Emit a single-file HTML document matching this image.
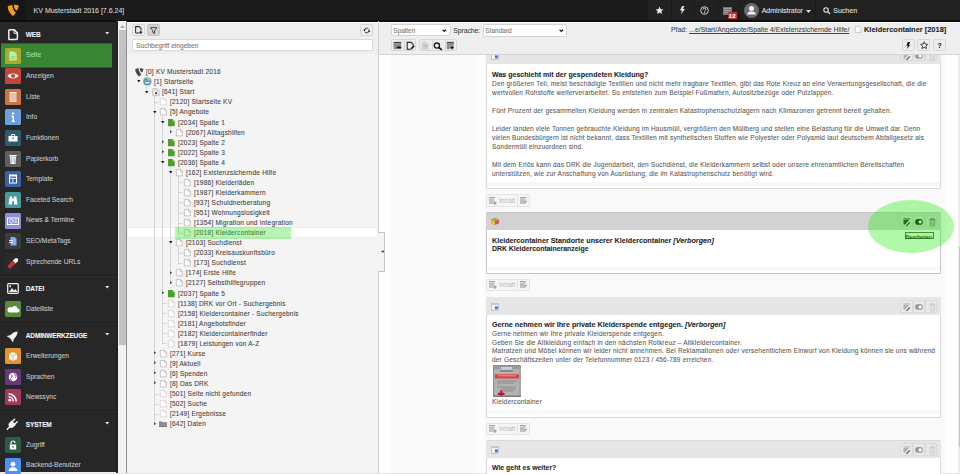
<!DOCTYPE html><html><head><meta charset="utf-8"><style>
*{margin:0;padding:0;box-sizing:border-box}
html,body{width:960px;height:474px;overflow:hidden;background:#f0f0f0;font-family:"Liberation Sans", sans-serif;}
.ab{position:absolute}
.t{position:absolute;white-space:nowrap;line-height:10px;-webkit-text-stroke:0.08px currentColor}
svg{position:absolute;overflow:visible}
</style></head><body>
<div class="ab" style="left:0px;top:0px;width:960px;height:21.6px;background:#1b1b1b"></div>
<div class="ab" style="left:0px;top:0px;width:26px;height:20px;background:#161616"></div>
<div class="ab" style="left:648px;top:0px;width:312px;height:20px;background:#222"></div>
<div class="ab" style="left:0px;top:19.8px;width:960px;height:1.8px;background:#0e0e0e"></div>
<svg style="left:0;top:0" width="26" height="21" viewBox="0 0 26 21"><path d="M7.8 6.4C9 5.6 11 5.1 12.3 5C12.6 8.5 14 11 15.8 12.6C15 14.5 13.8 15.6 12.7 15.9C10 13.5 7.6 9.5 7.8 6.4Z M13.8 4.9C15.5 4.6 17.5 4.9 18.7 5.6C18.8 7.5 17.8 9.8 16.6 10.6C15 9.5 13.9 7.5 13.8 4.9Z" fill="#f49a1a"/></svg>
<div class="t" style="left:33.6px;top:5.60px;font-size:7px;color:#d8d8d8;">KV Musterstadt 2016 [7.6.24]</div>
<div class="ab" style="left:670.8px;top:0px;width:1px;height:20px;background:#1a1a1a"></div>
<div class="ab" style="left:693.7px;top:0px;width:1px;height:20px;background:#1a1a1a"></div>
<div class="ab" style="left:717.5px;top:0px;width:1px;height:20px;background:#1a1a1a"></div>
<div class="ab" style="left:739.2px;top:0px;width:1px;height:20px;background:#1a1a1a"></div>
<div class="ab" style="left:814.6px;top:0px;width:1px;height:20px;background:#1a1a1a"></div>
<svg style="left:654.5px;top:5.5px" width="9" height="9" viewBox="0 0 24 24"><path d="M12 1.5l3.1 7 7.4.6-5.6 4.9 1.7 7.4L12 17.5l-6.6 3.9 1.7-7.4L1.5 9.1l7.4-.6z" fill="#eee"/></svg>
<svg style="left:679.5px;top:6px" width="5" height="8.5" viewBox="0 0 10 17"><path d="M4 0h5L6 6h4L2 17l2-8H0z" fill="#ddd"/></svg>
<svg style="left:700px;top:6px" width="9" height="9" viewBox="0 0 18 18"><circle cx="9" cy="9" r="7.6" fill="none" stroke="#ddd" stroke-width="1.8"/><path d="M6.3 7a2.7 2.7 0 1 1 3.8 2.4c-.8.4-1.1.8-1.1 1.7" fill="none" stroke="#ddd" stroke-width="1.8"/><circle cx="9" cy="13.3" r="1.1" fill="#ddd"/></svg>
<svg style="left:723px;top:7px" width="9" height="8" viewBox="0 0 9 8"><rect x="0" y="0" width="9" height="8" fill="#777"/><path d="M1 1.5h7M1 3.5h7M1 5.5h7" stroke="#aaa" stroke-width="0.8"/></svg>
<div class="ab" style="left:728px;top:12px;width:8.5px;height:7px;background:#c8302c;border-radius:1px"></div>
<div class="t" style="left:728.8px;top:11.20px;font-size:6px;color:#fff;font-weight:bold">12</div>
<svg style="left:743.8px;top:2.8px" width="15" height="15" viewBox="0 0 30 30"><circle cx="15" cy="15" r="15" fill="#6b6b6b"/><circle cx="15" cy="11" r="5" fill="#f2f2f2"/><path d="M6 23c1-5 5-6 9-6s8 1 9 6z" fill="#f2f2f2"/></svg>
<div class="t" style="left:761.7px;top:6.20px;font-size:7px;color:#e0e0e0;">Administrator</div>
<svg style="left:806px;top:9.5px" width="5" height="3" viewBox="0 0 5 3"><path d="M0 0h5L2.5 3z" fill="#ddd"/></svg>
<svg style="left:822.5px;top:6.8px" width="7.5" height="7.5" viewBox="0 0 16 16"><circle cx="6.5" cy="6.5" r="4.8" fill="none" stroke="#eee" stroke-width="2.2"/><path d="M10 10l4.8 4.8" stroke="#eee" stroke-width="2.6"/></svg>
<div class="t" style="left:833.3px;top:6.20px;font-size:7px;color:#e0e0e0;">Suchen</div>
<div class="ab" style="left:0px;top:21.6px;width:118px;height:450.9px;background:#272727"></div>
<div class="ab" style="left:115.8px;top:21px;width:1.8px;height:451.5px;background:#212121"></div>
<div class="ab" style="left:0px;top:472.5px;width:960px;height:1.5px;background:#e6e6e6"></div>
<svg style="left:7.9px;top:34.3px;margin-top:-5.4px" width="10.2" height="11.4" viewBox="0 0 10.2 11.4"><path d="M1.5 0.8h4.8l3.1 3.1v5.7a1 1 0 0 1-1 1H1.5a0.7 0.7 0 0 1-0.7-0.7V1.5a0.7 0.7 0 0 1 0.7-0.7z" fill="none" stroke="#eee" stroke-width="1.5"/><path d="M6 1v3.3h3.3" fill="none" stroke="#eee" stroke-width="1"/></svg>
<div class="t" style="left:25.8px;top:29.80px;font-size:6.5px;color:#f4f4f4;font-weight:bold;letter-spacing:-0.15px">WEB</div>
<svg style="left:104.8px;top:32.10px" width="4.4" height="2.4" viewBox="0 0 5 3"><path d="M0 0h5L2.5 3z" fill="#eee"/></svg>
<div class="ab" style="left:0.6px;top:42.8px;width:111.4px;height:25px;background:#3a8436;border-top:1.6px solid #1c6c1c;border-bottom:1.8px solid #1c6c1c"></div>
<div class="ab" style="left:5px;top:47.60px;width:16px;height:16px;background:#a6aa2e;border-radius:1.5px"></div>
<svg style="left:5px;top:47.60px" width="16" height="16" viewBox="0 0 16 16"><path d="M4.2 3.5h5l2.6 2.6v6.4H4.2z" fill="#b4f2a4"/><path d="M5.5 8.5h5M5.5 10.3h5M8 8.5v3.5" stroke="#9cc47a" stroke-width="0.6"/></svg>
<div class="t" style="left:26px;top:50.40px;font-size:6.65px;color:#a4e49c;">Seite</div>
<div class="ab" style="left:5px;top:68.22px;width:16px;height:16px;background:#c4453a;border-radius:1.5px"></div>
<svg style="left:5px;top:68.22px" width="16" height="16" viewBox="0 0 16 16"><path d="M2.5 8c2.2-3.2 8.8-3.2 11 0-2.2 3.2-8.8 3.2-11 0z" fill="#fff"/><circle cx="8" cy="8" r="2" fill="#c4453a"/></svg>
<div class="t" style="left:26px;top:71.02px;font-size:6.65px;color:#c8c8c8;">Anzeigen</div>
<div class="ab" style="left:5px;top:88.84px;width:16px;height:16px;background:#c87444;border-radius:1.5px"></div>
<svg style="left:5px;top:88.84px" width="16" height="16" viewBox="0 0 16 16"><rect x="4.5" y="3" width="7" height="10" fill="#f4e6dc"/><path d="M4.5 5h7M4.5 7h7M4.5 9h7M4.5 11h7" stroke="#c87444" stroke-width="0.6"/></svg>
<div class="t" style="left:26px;top:91.64px;font-size:6.65px;color:#c8c8c8;">Liste</div>
<div class="ab" style="left:5px;top:109.46px;width:16px;height:16px;background:#6b9fdc;border-radius:1.5px"></div>
<svg style="left:5px;top:109.46px" width="16" height="16" viewBox="0 0 16 16"><circle cx="8" cy="4.5" r="1.2" fill="#fff"/><path d="M6.5 6.8h2.5v5h1v1.2H6.5v-1.2h1v-3.8h-1z" fill="#fff"/></svg>
<div class="t" style="left:26px;top:112.26px;font-size:6.65px;color:#c8c8c8;">Info</div>
<div class="ab" style="left:5px;top:130.08px;width:16px;height:16px;background:#2f5b6b;border-radius:1.5px"></div>
<svg style="left:5px;top:130.08px" width="16" height="16" viewBox="0 0 16 16"><rect x="3.5" y="6" width="9" height="5.5" fill="#fff"/><path d="M6.3 6V4.5h3.4V6" fill="none" stroke="#fff" stroke-width="0.9"/><rect x="7.2" y="7.6" width="1.6" height="1.2" fill="#2f5b6b"/></svg>
<div class="t" style="left:26px;top:132.88px;font-size:6.65px;color:#c8c8c8;">Funktionen</div>
<div class="ab" style="left:5px;top:150.70px;width:16px;height:16px;background:#5f5f5f;border-radius:1.5px"></div>
<svg style="left:5px;top:150.70px" width="16" height="16" viewBox="0 0 16 16"><path d="M5 5.5h6l-.6 7.5H5.6z" fill="#fff"/><rect x="4.3" y="4" width="7.4" height="1.2" fill="#fff"/><path d="M6.8 6.5v5.5M9.2 6.5v5.5" stroke="#5f5f5f" stroke-width="0.6"/></svg>
<div class="t" style="left:26px;top:153.50px;font-size:6.65px;color:#c8c8c8;">Papierkorb</div>
<div class="ab" style="left:5px;top:171.32px;width:16px;height:16px;background:#3a62a8;border-radius:1.5px"></div>
<svg style="left:5px;top:171.32px" width="16" height="16" viewBox="0 0 16 16"><rect x="4" y="3.5" width="8" height="9" fill="#fff"/><rect x="5" y="5.5" width="6" height="1.3" fill="#3a62a8"/><rect x="5" y="7.8" width="2.5" height="3.8" fill="#3a62a8"/><rect x="8.3" y="7.8" width="2.7" height="3.8" fill="#3a62a8"/></svg>
<div class="t" style="left:26px;top:174.12px;font-size:6.65px;color:#c8c8c8;">Template</div>
<div class="ab" style="left:5px;top:191.94px;width:16px;height:16px;background:#4a9898;border-radius:1.5px"></div>
<svg style="left:5px;top:191.94px" width="16" height="16" viewBox="0 0 16 16"><path d="M3.5 12.5l1.2-8h2.4v8zM8.9 12.5V4.5h2.4l1.2 8z" fill="#fff"/><rect x="7" y="6.5" width="2" height="2.5" fill="#fff"/></svg>
<div class="t" style="left:26px;top:194.74px;font-size:6.65px;color:#c8c8c8;">Faceted Search</div>
<div class="ab" style="left:5px;top:212.56px;width:16px;height:16px;background:#8e8ee0;border-radius:1.5px"></div>
<svg style="left:5px;top:212.56px" width="16" height="16" viewBox="0 0 16 16"><rect x="2.5" y="5" width="11" height="6.5" fill="none" stroke="#fff" stroke-width="1"/><circle cx="6.5" cy="8.2" r="1.8" fill="none" stroke="#fff" stroke-width="0.9"/><path d="M9.5 6.8h2.5M9.5 8.2h2.5M9.5 9.6h2.5" stroke="#fff" stroke-width="0.7"/></svg>
<div class="t" style="left:26px;top:215.36px;font-size:6.65px;color:#c8c8c8;">News &amp; Termine</div>
<div class="ab" style="left:5px;top:233.18px;width:16px;height:16px;background:#3c3c3c;border-radius:1.5px"></div>
<svg style="left:5px;top:233.18px" width="16" height="16" viewBox="0 0 16 16"><path d="M5.5 4h4l2 2v6.5h-6z" fill="#7db0f0"/><path d="M4 7.5h4M4 9.5h4" stroke="#fff" stroke-width="0.8"/></svg>
<div class="t" style="left:26px;top:235.98px;font-size:6.65px;color:#c8c8c8;">SEO/MetaTags</div>
<div class="ab" style="left:5px;top:253.80px;width:16px;height:16px;background:#2a2a2a;border-radius:1.5px"></div>
<svg style="left:5px;top:253.80px" width="16" height="16" viewBox="0 0 16 16"><path d="M3.2 11.2l4.6-4.6 2.8 2.8-4.6 4.6a2 2 0 0 1-2.8-2.8z" fill="#c83030"/><path d="M7.8 6.6l2.2-2.2a2 2 0 0 1 2.8 2.8l-2.2 2.2z" fill="#f0f0f0"/></svg>
<div class="t" style="left:26px;top:256.60px;font-size:6.65px;color:#c8c8c8;">Sprechende URLs</div>
<div class="ab" style="left:0px;top:274.5px;width:118px;height:1px;background:#1f1f1f"></div>
<div class="ab" style="left:0px;top:275.5px;width:118px;height:1px;background:#2b2b2b"></div>
<svg style="left:7px;top:288.2px;margin-top:-5.5px" width="12" height="11" viewBox="0 0 12 11"><rect x="0.7" y="0.7" width="10.6" height="9.6" rx="1" fill="none" stroke="#eee" stroke-width="1.3"/><path d="M2 9l3-4 2 2.5 1.5-1.5L10.5 9z" fill="#eee"/><circle cx="3.2" cy="3.2" r="1" fill="#eee"/></svg>
<div class="t" style="left:25.8px;top:283.70px;font-size:6.5px;color:#f4f4f4;font-weight:bold;letter-spacing:-0.15px">DATEI</div>
<svg style="left:104.8px;top:286.00px" width="4.4" height="2.4" viewBox="0 0 5 3"><path d="M0 0h5L2.5 3z" fill="#eee"/></svg>
<div class="ab" style="left:5px;top:300.80px;width:16px;height:16px;background:#5b8a3e;border-radius:1.5px"></div>
<svg style="left:5px;top:300.80px" width="16" height="16" viewBox="0 0 16 16"><path d="M4 11.5h8.5a2 2 0 0 0 0-4 3 3 0 0 0-5.6-1 2.4 2.4 0 0 0-2.9 5z" fill="#fff"/></svg>
<div class="t" style="left:26px;top:303.60px;font-size:6.65px;color:#c8c8c8;">Dateiliste</div>
<div class="ab" style="left:0px;top:322.0px;width:118px;height:1px;background:#1f1f1f"></div>
<div class="ab" style="left:0px;top:323.0px;width:118px;height:1px;background:#2b2b2b"></div>
<svg style="left:0;top:335.6px;margin-top:-335.6px" width="26" height="350" viewBox="0 0 26 350"><g transform="translate(12.8 336.2) rotate(-45)"><path d="M-2.5 -2.4C0 -2.8 4 -2.6 6.8 0C4 2.6 0 2.8 -2.5 2.4z" fill="#f4f4f4"/><path d="M-1 -2.4L-4.2 -4.6L-3.8 -1.5zM-1 2.4L-4.2 4.6L-3.8 1.5z" fill="#f4f4f4"/><rect x="-3.6" y="-1.6" width="1.6" height="3.2" fill="#f4f4f4"/></g></svg>
<div class="t" style="left:25.8px;top:331.10px;font-size:6.5px;color:#f4f4f4;font-weight:bold;letter-spacing:-0.15px">ADMINWERKZEUGE</div>
<svg style="left:104.8px;top:333.40px" width="4.4" height="2.4" viewBox="0 0 5 3"><path d="M0 0h5L2.5 3z" fill="#eee"/></svg>
<div class="ab" style="left:5px;top:348.20px;width:16px;height:16px;background:#e29430;border-radius:1.5px"></div>
<svg style="left:5px;top:348.20px" width="16" height="16" viewBox="0 0 16 16"><path d="M4 6l4-2 4 2v5l-4 2-4-2z" fill="#fff"/><path d="M4 6l4 2 4-2M8 8v5" stroke="#e29430" stroke-width="0.7" fill="none"/></svg>
<div class="t" style="left:26px;top:351.00px;font-size:6.65px;color:#c8c8c8;">Erweiterungen</div>
<div class="ab" style="left:5px;top:368.80px;width:16px;height:16px;background:#6a3778;border-radius:1.5px"></div>
<svg style="left:5px;top:368.80px" width="16" height="16" viewBox="0 0 16 16"><circle cx="8" cy="8" r="4.3" fill="#fff"/><path d="M6 5.5c1 1 1.5 1 1 2.5-.5.6-1.8.5-1.5 2 .5.5 1 1.5.5 2.2M9.5 4.5c-.5 1 .5 1.5 1.5 1.7.5 1 .2 2-1 2.5" stroke="#6a3778" stroke-width="0.9" fill="none"/></svg>
<div class="t" style="left:26px;top:371.60px;font-size:6.65px;color:#c8c8c8;">Sprachen</div>
<div class="ab" style="left:5px;top:389.40px;width:16px;height:16px;background:#a23a5c;border-radius:1.5px"></div>
<svg style="left:5px;top:389.40px" width="16" height="16" viewBox="0 0 16 16"><circle cx="4.8" cy="11.2" r="1.4" fill="#fff"/><path d="M3.5 7.8a4.8 4.8 0 0 1 4.8 4.8M3.5 4.8a7.8 7.8 0 0 1 7.8 7.8" stroke="#fff" stroke-width="1.6" fill="none"/></svg>
<div class="t" style="left:26px;top:392.20px;font-size:6.65px;color:#c8c8c8;">Newssync</div>
<div class="ab" style="left:0px;top:410.0px;width:118px;height:1px;background:#1f1f1f"></div>
<div class="ab" style="left:0px;top:411.0px;width:118px;height:1px;background:#2b2b2b"></div>
<svg style="left:0;top:424.2px;margin-top:-424.2px" width="26" height="440" viewBox="0 0 26 440"><g transform="translate(12.2 424.2) rotate(-45)"><circle cx="-1" cy="0" r="2.9" fill="#f4f4f4"/><rect x="-1" y="-2.9" width="3.2" height="5.8" fill="#f4f4f4"/><path d="M2 -1.8H5.2M2 1.8H5.2" stroke="#f4f4f4" stroke-width="1.5" stroke-linecap="round"/><path d="M-3.5 0H-7" stroke="#f4f4f4" stroke-width="1.4" stroke-linecap="round"/></g></svg>
<div class="t" style="left:25.8px;top:419.70px;font-size:6.5px;color:#f4f4f4;font-weight:bold;letter-spacing:-0.15px">SYSTEM</div>
<svg style="left:104.8px;top:422.00px" width="4.4" height="2.4" viewBox="0 0 5 3"><path d="M0 0h5L2.5 3z" fill="#eee"/></svg>
<div class="ab" style="left:5px;top:437.00px;width:16px;height:16px;background:#2f5a45;border-radius:1.5px"></div>
<svg style="left:5px;top:437.00px" width="16" height="16" viewBox="0 0 16 16"><rect x="4.8" y="7.5" width="6.4" height="5" fill="#fff"/><path d="M6 7.5V6a2 2 0 0 1 4 0" stroke="#fff" stroke-width="1.2" fill="none"/><rect x="7.6" y="9" width="0.9" height="2" fill="#2f5a45"/></svg>
<div class="t" style="left:26px;top:439.80px;font-size:6.65px;color:#c8c8c8;">Zugriff</div>
<div class="ab" style="left:5px;top:457.60px;width:16px;height:16px;background:#5190ee;border-radius:1.5px"></div>
<svg style="left:5px;top:457.60px" width="16" height="16" viewBox="0 0 16 16"><circle cx="8" cy="6.2" r="2.4" fill="#fff"/><path d="M3.5 13c.5-2.8 2-3.8 4.5-3.8s4 1 4.5 3.8z" fill="#fff"/></svg>
<div class="t" style="left:26px;top:460.40px;font-size:6.65px;color:#c8c8c8;">Backend-Benutzer</div>
<div class="ab" style="left:118px;top:21px;width:8px;height:451.5px;background:#f2f2f2"></div>
<svg style="left:119.5px;top:24.5px" width="5" height="3" viewBox="0 0 5 3"><path d="M0 3L2.5 0 5 3z" fill="#aaa"/></svg>
<div class="ab" style="left:119.3px;top:29.7px;width:6.7px;height:315.8px;background:#c2c2c2"></div>
<div class="ab" style="left:126px;top:21px;width:1px;height:451.5px;background:#8f8f8f"></div>
<div class="ab" style="left:127px;top:21.6px;width:251.5px;height:32.2px;background:#eeeeee;border-top:1px solid #fafafa"></div>
<div class="ab" style="left:127px;top:53.6px;width:251.5px;height:0.9px;background:#d2d2d2"></div>
<div class="ab" style="left:127px;top:54px;width:251.5px;height:418.5px;background:#f4f4f4"></div>
<div class="ab" style="left:131.5px;top:24.2px;width:13.1px;height:12.3px;background:#ececec;border:0.6px solid #d6d6d6;border-radius:1.5px"></div>
<svg style="left:134.9px;top:26.4px" width="7.2" height="7.7" viewBox="0 0 14 15"><path d="M1.2 13.8V1.2h7l3.6 3.6v3.4M8.6 13.8H1.2" fill="none" stroke="#2a2a2a" stroke-width="2"/><path d="M11.2 9.5v5.5M8.5 12.3H14" stroke="#111" stroke-width="2.2"/></svg>
<div class="ab" style="left:146.7px;top:24.2px;width:13.1px;height:12.3px;background:#d2d2d2;border:0.6px solid #c2c2c2;border-radius:1.5px"></div>
<svg style="left:149.6px;top:26.7px" width="7.4" height="7.1" viewBox="0 0 15 14"><path d="M1 1.2h13L9.3 6.8v6L5.7 11V6.8z" fill="#e8e8e8" stroke="#333" stroke-width="1.9" stroke-linejoin="round"/></svg>
<div class="ab" style="left:359.8px;top:24.2px;width:13.2px;height:12.3px;background:#ececec;border:0.6px solid #d6d6d6;border-radius:1.5px"></div>
<svg style="left:362.6px;top:26.9px" width="7.6" height="7" viewBox="0 0 16 15"><path d="M3 6.5A5.2 5.2 0 0 1 12 4.2M13 8.5A5.2 5.2 0 0 1 4 10.8" fill="none" stroke="#333" stroke-width="2"/><path d="M0.5 5.5l2.5 4 2.5-4z M15.5 9.5l-2.5-4-2.5 4z" fill="#111"/></svg>
<div class="ab" style="left:131.9px;top:39.4px;width:241.5px;height:11.8px;background:#fff;border:0.6px solid #d8d8d8;border-radius:1.5px"></div>
<div class="t" style="left:136.1px;top:40.80px;font-size:6.6px;color:#777;">Suchbegriff eingeben</div>
<div class="ab" style="left:378px;top:21px;width:1px;height:451.5px;background:#cfcfcf"></div>
<div class="ab" style="left:127.5px;top:228.2px;width:249px;height:8.9px;background:#fff;border-radius:1px;box-shadow:0 0 0 0.5px #e8e8e8"></div>
<div class="ab" style="left:146.4px;top:85.76px;width:0.8px;height:6.060000000000002px;background:#d6d6d6"></div>
<div class="ab" style="left:154.4px;top:95.82000000000001px;width:0.8px;height:327.98px;background:#d6d6d6"></div>
<div class="ab" style="left:162.4px;top:115.94px;width:0.8px;height:227.38px;background:#d6d6d6"></div>
<div class="ab" style="left:170.4px;top:126.0px;width:0.8px;height:6.060000000000002px;background:#d6d6d6"></div>
<div class="ab" style="left:170.4px;top:166.24px;width:0.8px;height:116.72000000000003px;background:#d6d6d6"></div>
<div class="ab" style="left:178.4px;top:176.3px;width:0.8px;height:56.360000000000014px;background:#d6d6d6"></div>
<div class="ab" style="left:178.4px;top:246.72000000000003px;width:0.8px;height:16.120000000000005px;background:#d6d6d6"></div>
<div class="ab" style="left:154.4px;top:101.88px;width:5px;height:0.8px;background:#d6d6d6"></div>
<div class="ab" style="left:178.4px;top:182.36px;width:5px;height:0.8px;background:#d6d6d6"></div>
<div class="ab" style="left:178.4px;top:192.42000000000002px;width:5px;height:0.8px;background:#d6d6d6"></div>
<div class="ab" style="left:178.4px;top:202.48000000000002px;width:5px;height:0.8px;background:#d6d6d6"></div>
<div class="ab" style="left:178.4px;top:212.54000000000002px;width:5px;height:0.8px;background:#d6d6d6"></div>
<div class="ab" style="left:178.4px;top:222.60000000000002px;width:5px;height:0.8px;background:#d6d6d6"></div>
<div class="ab" style="left:178.4px;top:232.66000000000003px;width:5px;height:0.8px;background:#d6d6d6"></div>
<div class="ab" style="left:178.4px;top:252.78000000000003px;width:5px;height:0.8px;background:#d6d6d6"></div>
<div class="ab" style="left:178.4px;top:262.84000000000003px;width:5px;height:0.8px;background:#d6d6d6"></div>
<div class="ab" style="left:162.4px;top:303.08000000000004px;width:5px;height:0.8px;background:#d6d6d6"></div>
<div class="ab" style="left:162.4px;top:313.14px;width:5px;height:0.8px;background:#d6d6d6"></div>
<div class="ab" style="left:162.4px;top:323.2px;width:5px;height:0.8px;background:#d6d6d6"></div>
<div class="ab" style="left:162.4px;top:333.26px;width:5px;height:0.8px;background:#d6d6d6"></div>
<div class="ab" style="left:162.4px;top:343.32px;width:5px;height:0.8px;background:#d6d6d6"></div>
<div class="ab" style="left:154.4px;top:393.62px;width:5px;height:0.8px;background:#d6d6d6"></div>
<div class="ab" style="left:154.4px;top:403.68px;width:5px;height:0.8px;background:#d6d6d6"></div>
<div class="ab" style="left:154.4px;top:413.74px;width:5px;height:0.8px;background:#d6d6d6"></div>
<svg style="left:134.80px;top:67.70px" width="8.6" height="8.6" viewBox="7.6 4.6 11.4 11.4"><path d="M7.8 6.4C9 5.6 11 5.1 12.3 5C12.6 8.5 14 11 15.8 12.6C15 14.5 13.8 15.6 12.7 15.9C10 13.5 7.6 9.5 7.8 6.4Z M13.8 4.9C15.5 4.6 17.5 4.9 18.7 5.6C18.8 7.5 17.8 9.8 16.6 10.6C15 9.5 13.9 7.5 13.8 4.9Z" fill="#4a4a4a"/></svg>
<div class="t" style="left:146px;top:67.20px;font-size:6.55px;color:#444;letter-spacing:0.2px">[0] KV Musterstadt 2016</div>
<svg style="left:142.90px;top:77.06px" width="8.6" height="8.9" viewBox="0 0 17 17.6"><circle cx="8.5" cy="8.8" r="8" fill="#4b8fdc" stroke="#9cc4f0" stroke-width="1"/><path d="M7.5 1.5c3.5-.8 7 1.5 8 4.5-2 1.8-5 1.2-6.5-.2-1.2-1-1.8-2.6-1.5-4.3z" fill="#a8d03c"/><path d="M1 8c2 .3 3.5 2.5 3.3 5.5-1.8-.5-3-2.8-3.3-5.5z" fill="#7ab83a"/><rect x="4.6" y="7" width="7.8" height="5.8" rx="1" fill="#f4f4f4" stroke="#999" stroke-width="0.6"/><rect x="6" y="7.6" width="5" height="1.8" fill="#333"/></svg>
<svg style="left:137.10px;top:80.46px" width="3.6" height="2.4" viewBox="0 0 4 3"><path d="M0 0h4L2 3z" fill="#111"/></svg>
<div class="t" style="left:154px;top:77.26px;font-size:6.55px;color:#444;letter-spacing:0.2px">[1] Startseite</div>
<svg style="left:152.20px;top:87.62px" width="7.7" height="8.1" viewBox="0 0 15 16"><path d="M1 1h8.5L14 5.5V15H1z" fill="#e4e4e4" stroke="#a8a8a8" stroke-width="1"/><path d="M9.5 1v4.5H14" fill="#f4f4f4" stroke="#a8a8a8" stroke-width="1"/><circle cx="8" cy="10.5" r="3.2" fill="#fff"/><circle cx="8" cy="10.5" r="2" fill="#111"/></svg>
<svg style="left:145.10px;top:90.52px" width="3.6" height="2.4" viewBox="0 0 4 3"><path d="M0 0h4L2 3z" fill="#111"/></svg>
<div class="t" style="left:162px;top:87.32px;font-size:6.55px;color:#444;letter-spacing:0.2px">[641] Start</div>
<svg style="left:160.10px;top:98.38px" width="6.7" height="7.3" viewBox="0 0 14 15"><path d="M.7.7h8.6l4 4v9.6H.7z" fill="#fcfcfc" stroke="#c4c4c4" stroke-width="1.1"/><path d="M9.3.7v4h4" fill="none" stroke="#c4c4c4" stroke-width="1"/></svg>
<div class="t" style="left:170px;top:97.38px;font-size:6.55px;color:#444;letter-spacing:0.2px">[2120] Startseite KV</div>
<svg style="left:160.10px;top:108.44px" width="6.7" height="7.3" viewBox="0 0 14 15"><path d="M.7.7h8.6l4 4v9.6H.7z" fill="#fcfcfc" stroke="#9a9a9a" stroke-width="1.1"/><path d="M9.3.7v4h4" fill="none" stroke="#9a9a9a" stroke-width="1"/></svg>
<svg style="left:153.10px;top:110.64px" width="3.6" height="2.4" viewBox="0 0 4 3"><path d="M0 0h4L2 3z" fill="#111"/></svg>
<div class="t" style="left:170px;top:107.44px;font-size:6.55px;color:#444;letter-spacing:0.2px">[5] Angebote</div>
<svg style="left:168.10px;top:118.50px" width="6.7" height="7.3" viewBox="0 0 14 15"><path d="M0 0h9.5L14 4.5V15H0z" fill="#4aa02a"/><path d="M9.5 0v4.5H14" fill="#9ad07a"/></svg>
<svg style="left:161.10px;top:120.70px" width="3.6" height="2.4" viewBox="0 0 4 3"><path d="M0 0h4L2 3z" fill="#111"/></svg>
<div class="t" style="left:178px;top:117.50px;font-size:6.55px;color:#444;letter-spacing:0.2px">[2034] Spalte 1</div>
<svg style="left:176.10px;top:128.56px" width="6.7" height="7.3" viewBox="0 0 14 15"><path d="M.7.7h8.6l4 4v9.6H.7z" fill="#fcfcfc" stroke="#9a9a9a" stroke-width="1.1"/><path d="M9.3.7v4h4" fill="none" stroke="#9a9a9a" stroke-width="1"/></svg>
<svg style="left:169.90px;top:129.76px" width="2.2" height="3.4" viewBox="0 0 3 4"><path d="M0 0v4l3-2z" fill="#444"/></svg>
<div class="t" style="left:186px;top:127.56px;font-size:6.55px;color:#444;letter-spacing:0.2px">[2067] Alltagshilfen</div>
<svg style="left:168.10px;top:138.62px" width="6.7" height="7.3" viewBox="0 0 14 15"><path d="M0 0h9.5L14 4.5V15H0z" fill="#4aa02a"/><path d="M9.5 0v4.5H14" fill="#9ad07a"/></svg>
<svg style="left:161.90px;top:139.82px" width="2.2" height="3.4" viewBox="0 0 3 4"><path d="M0 0v4l3-2z" fill="#444"/></svg>
<div class="t" style="left:178px;top:137.62px;font-size:6.55px;color:#444;letter-spacing:0.2px">[2023] Spalte 2</div>
<svg style="left:168.10px;top:148.68px" width="6.7" height="7.3" viewBox="0 0 14 15"><path d="M0 0h9.5L14 4.5V15H0z" fill="#4aa02a"/><path d="M9.5 0v4.5H14" fill="#9ad07a"/></svg>
<svg style="left:161.90px;top:149.88px" width="2.2" height="3.4" viewBox="0 0 3 4"><path d="M0 0v4l3-2z" fill="#444"/></svg>
<div class="t" style="left:178px;top:147.68px;font-size:6.55px;color:#444;letter-spacing:0.2px">[2022] Spalte 3</div>
<svg style="left:168.10px;top:158.74px" width="6.7" height="7.3" viewBox="0 0 14 15"><path d="M0 0h9.5L14 4.5V15H0z" fill="#4aa02a"/><path d="M9.5 0v4.5H14" fill="#9ad07a"/></svg>
<svg style="left:161.10px;top:160.94px" width="3.6" height="2.4" viewBox="0 0 4 3"><path d="M0 0h4L2 3z" fill="#111"/></svg>
<div class="t" style="left:178px;top:157.74px;font-size:6.55px;color:#444;letter-spacing:0.2px">[2036] Spalte 4</div>
<svg style="left:176.10px;top:168.80px" width="6.7" height="7.3" viewBox="0 0 14 15"><path d="M.7.7h8.6l4 4v9.6H.7z" fill="#fcfcfc" stroke="#9a9a9a" stroke-width="1.1"/><path d="M9.3.7v4h4" fill="none" stroke="#9a9a9a" stroke-width="1"/></svg>
<svg style="left:169.10px;top:171.00px" width="3.6" height="2.4" viewBox="0 0 4 3"><path d="M0 0h4L2 3z" fill="#111"/></svg>
<div class="t" style="left:186px;top:167.80px;font-size:6.55px;color:#444;letter-spacing:0.2px">[162] Existenzsichernde Hilfe</div>
<svg style="left:184.10px;top:178.86px" width="6.7" height="7.3" viewBox="0 0 14 15"><path d="M.7.7h8.6l4 4v9.6H.7z" fill="#fcfcfc" stroke="#9a9a9a" stroke-width="1.1"/><path d="M9.3.7v4h4" fill="none" stroke="#9a9a9a" stroke-width="1"/></svg>
<div class="t" style="left:194px;top:177.86px;font-size:6.55px;color:#444;letter-spacing:0.2px">[1986] Kleiderläden</div>
<svg style="left:184.10px;top:188.92px" width="6.7" height="7.3" viewBox="0 0 14 15"><path d="M.7.7h8.6l4 4v9.6H.7z" fill="#fcfcfc" stroke="#9a9a9a" stroke-width="1.1"/><path d="M9.3.7v4h4" fill="none" stroke="#9a9a9a" stroke-width="1"/></svg>
<div class="t" style="left:194px;top:187.92px;font-size:6.55px;color:#444;letter-spacing:0.2px">[1987] Kleiderkammern</div>
<svg style="left:184.10px;top:198.98px" width="6.7" height="7.3" viewBox="0 0 14 15"><path d="M.7.7h8.6l4 4v9.6H.7z" fill="#fcfcfc" stroke="#9a9a9a" stroke-width="1.1"/><path d="M9.3.7v4h4" fill="none" stroke="#9a9a9a" stroke-width="1"/></svg>
<div class="t" style="left:194px;top:197.98px;font-size:6.55px;color:#444;letter-spacing:0.2px">[937] Schuldnerberatung</div>
<svg style="left:184.10px;top:209.04px" width="6.7" height="7.3" viewBox="0 0 14 15"><path d="M.7.7h8.6l4 4v9.6H.7z" fill="#fcfcfc" stroke="#9a9a9a" stroke-width="1.1"/><path d="M9.3.7v4h4" fill="none" stroke="#9a9a9a" stroke-width="1"/></svg>
<div class="t" style="left:194px;top:208.04px;font-size:6.55px;color:#444;letter-spacing:0.2px">[951] Wohnungslosigkeit</div>
<svg style="left:184.10px;top:219.10px" width="6.7" height="7.3" viewBox="0 0 14 15"><path d="M.7.7h8.6l4 4v9.6H.7z" fill="#fcfcfc" stroke="#9a9a9a" stroke-width="1.1"/><path d="M9.3.7v4h4" fill="none" stroke="#9a9a9a" stroke-width="1"/></svg>
<div class="t" style="left:194px;top:218.10px;font-size:6.55px;color:#444;letter-spacing:0.2px">[1354] Migration und Integration</div>
<svg style="left:184.10px;top:229.16px" width="6.7" height="7.3" viewBox="0 0 14 15"><path d="M.7.7h8.6l4 4v9.6H.7z" fill="#fcfcfc" stroke="#9a9a9a" stroke-width="1.1"/><path d="M9.3.7v4h4" fill="none" stroke="#9a9a9a" stroke-width="1"/></svg>
<div class="t" style="left:194px;top:228.16px;font-size:6.55px;color:#444;letter-spacing:0.2px">[2018] Kleidercontainer</div>
<svg style="left:176.10px;top:239.22px" width="6.7" height="7.3" viewBox="0 0 14 15"><path d="M.7.7h8.6l4 4v9.6H.7z" fill="#fcfcfc" stroke="#9a9a9a" stroke-width="1.1"/><path d="M9.3.7v4h4" fill="none" stroke="#9a9a9a" stroke-width="1"/></svg>
<svg style="left:169.10px;top:241.42px" width="3.6" height="2.4" viewBox="0 0 4 3"><path d="M0 0h4L2 3z" fill="#111"/></svg>
<div class="t" style="left:186px;top:238.22px;font-size:6.55px;color:#444;letter-spacing:0.2px">[2103] Suchdienst</div>
<svg style="left:184.10px;top:249.28px" width="6.7" height="7.3" viewBox="0 0 14 15"><path d="M.7.7h8.6l4 4v9.6H.7z" fill="#fcfcfc" stroke="#9a9a9a" stroke-width="1.1"/><path d="M9.3.7v4h4" fill="none" stroke="#9a9a9a" stroke-width="1"/></svg>
<div class="t" style="left:194px;top:248.28px;font-size:6.55px;color:#444;letter-spacing:0.2px">[2033] Kreisauskunftsbüro</div>
<svg style="left:184.10px;top:259.34px" width="6.7" height="7.3" viewBox="0 0 14 15"><path d="M.7.7h8.6l4 4v9.6H.7z" fill="#fcfcfc" stroke="#9a9a9a" stroke-width="1.1"/><path d="M9.3.7v4h4" fill="none" stroke="#9a9a9a" stroke-width="1"/></svg>
<div class="t" style="left:194px;top:258.34px;font-size:6.55px;color:#444;letter-spacing:0.2px">[173] Suchdienst</div>
<svg style="left:176.10px;top:269.40px" width="6.7" height="7.3" viewBox="0 0 14 15"><path d="M.7.7h8.6l4 4v9.6H.7z" fill="#fcfcfc" stroke="#9a9a9a" stroke-width="1.1"/><path d="M9.3.7v4h4" fill="none" stroke="#9a9a9a" stroke-width="1"/></svg>
<svg style="left:169.90px;top:270.60px" width="2.2" height="3.4" viewBox="0 0 3 4"><path d="M0 0v4l3-2z" fill="#444"/></svg>
<div class="t" style="left:186px;top:268.40px;font-size:6.55px;color:#444;letter-spacing:0.2px">[174] Erste Hilfe</div>
<svg style="left:176.10px;top:279.46px" width="6.7" height="7.3" viewBox="0 0 14 15"><path d="M.7.7h8.6l4 4v9.6H.7z" fill="#fcfcfc" stroke="#9a9a9a" stroke-width="1.1"/><path d="M9.3.7v4h4" fill="none" stroke="#9a9a9a" stroke-width="1"/></svg>
<svg style="left:169.90px;top:280.66px" width="2.2" height="3.4" viewBox="0 0 3 4"><path d="M0 0v4l3-2z" fill="#444"/></svg>
<div class="t" style="left:186px;top:278.46px;font-size:6.55px;color:#444;letter-spacing:0.2px">[2127] Selbsthilfegruppen</div>
<svg style="left:168.10px;top:289.52px" width="6.7" height="7.3" viewBox="0 0 14 15"><path d="M0 0h9.5L14 4.5V15H0z" fill="#4aa02a"/><path d="M9.5 0v4.5H14" fill="#9ad07a"/></svg>
<svg style="left:161.90px;top:290.72px" width="2.2" height="3.4" viewBox="0 0 3 4"><path d="M0 0v4l3-2z" fill="#444"/></svg>
<div class="t" style="left:178px;top:288.52px;font-size:6.55px;color:#444;letter-spacing:0.2px">[2037] Spalte 5</div>
<svg style="left:168.10px;top:299.58px" width="6.7" height="7.3" viewBox="0 0 14 15"><path d="M.7.7h8.6l4 4v9.6H.7z" fill="#fcfcfc" stroke="#c4c4c4" stroke-width="1.1"/><path d="M9.3.7v4h4" fill="none" stroke="#c4c4c4" stroke-width="1"/></svg>
<div class="t" style="left:178px;top:298.58px;font-size:6.55px;color:#444;letter-spacing:0.2px">[1138] DRK vor Ort - Suchergebnis</div>
<svg style="left:168.10px;top:309.64px" width="6.7" height="7.3" viewBox="0 0 14 15"><path d="M.7.7h8.6l4 4v9.6H.7z" fill="#fcfcfc" stroke="#c4c4c4" stroke-width="1.1"/><path d="M9.3.7v4h4" fill="none" stroke="#c4c4c4" stroke-width="1"/></svg>
<div class="t" style="left:178px;top:308.64px;font-size:6.55px;color:#444;letter-spacing:0.2px">[2158] Kleidercontainer - Suchergebnis</div>
<svg style="left:168.10px;top:319.70px" width="6.7" height="7.3" viewBox="0 0 14 15"><path d="M.7.7h8.6l4 4v9.6H.7z" fill="#fcfcfc" stroke="#c4c4c4" stroke-width="1.1"/><path d="M9.3.7v4h4" fill="none" stroke="#c4c4c4" stroke-width="1"/></svg>
<div class="t" style="left:178px;top:318.70px;font-size:6.55px;color:#444;letter-spacing:0.2px">[2181] Angebotsfinder</div>
<svg style="left:168.10px;top:329.76px" width="6.7" height="7.3" viewBox="0 0 14 15"><path d="M.7.7h8.6l4 4v9.6H.7z" fill="#fcfcfc" stroke="#c4c4c4" stroke-width="1.1"/><path d="M9.3.7v4h4" fill="none" stroke="#c4c4c4" stroke-width="1"/></svg>
<div class="t" style="left:178px;top:328.76px;font-size:6.55px;color:#444;letter-spacing:0.2px">[2182] Kleidercontainerfinder</div>
<svg style="left:168.10px;top:339.82px" width="6.7" height="7.3" viewBox="0 0 14 15"><path d="M.7.7h8.6l4 4v9.6H.7z" fill="#fcfcfc" stroke="#c4c4c4" stroke-width="1.1"/><path d="M9.3.7v4h4" fill="none" stroke="#c4c4c4" stroke-width="1"/></svg>
<div class="t" style="left:178px;top:338.82px;font-size:6.55px;color:#444;letter-spacing:0.2px">[1879] Leistungen von A-Z</div>
<svg style="left:160.10px;top:349.88px" width="6.7" height="7.3" viewBox="0 0 14 15"><path d="M.7.7h8.6l4 4v9.6H.7z" fill="#fcfcfc" stroke="#9a9a9a" stroke-width="1.1"/><path d="M9.3.7v4h4" fill="none" stroke="#9a9a9a" stroke-width="1"/></svg>
<svg style="left:153.90px;top:351.08px" width="2.2" height="3.4" viewBox="0 0 3 4"><path d="M0 0v4l3-2z" fill="#444"/></svg>
<div class="t" style="left:170px;top:348.88px;font-size:6.55px;color:#444;letter-spacing:0.2px">[271] Kurse</div>
<svg style="left:160.10px;top:359.94px" width="6.7" height="7.3" viewBox="0 0 14 15"><path d="M.7.7h8.6l4 4v9.6H.7z" fill="#fcfcfc" stroke="#9a9a9a" stroke-width="1.1"/><path d="M9.3.7v4h4" fill="none" stroke="#9a9a9a" stroke-width="1"/></svg>
<svg style="left:153.90px;top:361.14px" width="2.2" height="3.4" viewBox="0 0 3 4"><path d="M0 0v4l3-2z" fill="#444"/></svg>
<div class="t" style="left:170px;top:358.94px;font-size:6.55px;color:#444;letter-spacing:0.2px">[9] Aktuell</div>
<svg style="left:160.10px;top:370.00px" width="6.7" height="7.3" viewBox="0 0 14 15"><path d="M.7.7h8.6l4 4v9.6H.7z" fill="#fcfcfc" stroke="#9a9a9a" stroke-width="1.1"/><path d="M9.3.7v4h4" fill="none" stroke="#9a9a9a" stroke-width="1"/></svg>
<svg style="left:153.90px;top:371.20px" width="2.2" height="3.4" viewBox="0 0 3 4"><path d="M0 0v4l3-2z" fill="#444"/></svg>
<div class="t" style="left:170px;top:369.00px;font-size:6.55px;color:#444;letter-spacing:0.2px">[6] Spenden</div>
<svg style="left:160.10px;top:380.06px" width="6.7" height="7.3" viewBox="0 0 14 15"><path d="M.7.7h8.6l4 4v9.6H.7z" fill="#fcfcfc" stroke="#9a9a9a" stroke-width="1.1"/><path d="M9.3.7v4h4" fill="none" stroke="#9a9a9a" stroke-width="1"/></svg>
<svg style="left:153.90px;top:381.26px" width="2.2" height="3.4" viewBox="0 0 3 4"><path d="M0 0v4l3-2z" fill="#444"/></svg>
<div class="t" style="left:170px;top:379.06px;font-size:6.55px;color:#444;letter-spacing:0.2px">[8] Das DRK</div>
<svg style="left:160.10px;top:390.12px" width="6.7" height="7.3" viewBox="0 0 14 15"><path d="M.7.7h8.6l4 4v9.6H.7z" fill="#fcfcfc" stroke="#c4c4c4" stroke-width="1.1"/><path d="M9.3.7v4h4" fill="none" stroke="#c4c4c4" stroke-width="1"/></svg>
<div class="t" style="left:170px;top:389.12px;font-size:6.55px;color:#444;letter-spacing:0.2px">[501] Seite nicht gefunden</div>
<svg style="left:160.10px;top:400.18px" width="6.7" height="7.3" viewBox="0 0 14 15"><path d="M.7.7h8.6l4 4v9.6H.7z" fill="#fcfcfc" stroke="#c4c4c4" stroke-width="1.1"/><path d="M9.3.7v4h4" fill="none" stroke="#c4c4c4" stroke-width="1"/></svg>
<div class="t" style="left:170px;top:399.18px;font-size:6.55px;color:#444;letter-spacing:0.2px">[502] Suche</div>
<svg style="left:160.10px;top:410.24px" width="6.7" height="7.3" viewBox="0 0 14 15"><path d="M.7.7h8.6l4 4v9.6H.7z" fill="#fcfcfc" stroke="#c4c4c4" stroke-width="1.1"/><path d="M9.3.7v4h4" fill="none" stroke="#c4c4c4" stroke-width="1"/></svg>
<div class="t" style="left:170px;top:409.24px;font-size:6.55px;color:#444;letter-spacing:0.2px">[2149] Ergebnisse</div>
<svg style="left:159.20px;top:420.50px" width="8" height="6" viewBox="0 0 16 12"><path d="M0 1h6l1.5 1.5H16V12H0z" fill="#777"/><path d="M0 4h16M0 6.5h16M0 9h16" stroke="#ccc" stroke-width="0.7"/></svg>
<svg style="left:153.90px;top:421.50px" width="2.2" height="3.4" viewBox="0 0 3 4"><path d="M0 0v4l3-2z" fill="#444"/></svg>
<div class="t" style="left:170px;top:419.30px;font-size:6.55px;color:#444;letter-spacing:0.2px">[642] Daten</div>
<div class="ab" style="left:175.3px;top:226.7px;width:116px;height:12.8px;background:rgba(60,230,50,0.38)"></div>
<div class="ab" style="left:379px;top:54px;width:581px;height:418.5px;background:#fff"></div>
<div class="ab" style="left:391px;top:54px;width:85px;height:418.5px;background:#f9f9f9"></div>
<div class="ab" style="left:476px;top:54px;width:9px;height:418.5px;background:#fdfdfd"></div>
<div class="ab" style="left:485px;top:54px;width:460px;height:418.5px;background:#f9f9f9"></div>
<div class="ab" style="left:958px;top:54px;width:2px;height:418.5px;background:#ececec"></div>
<div class="ab" style="left:958.6px;top:247px;width:1.4px;height:200px;background:#c4c4c4"></div>
<div class="ab" style="left:486px;top:46.2px;width:455px;height:143.00000000000003px;background:#fff;border:0.8px solid #d9d9d9;border-radius:1px"></div>
<div class="ab" style="left:486.4px;top:46.6px;width:454.2px;height:17.4px;background:#e6e6e6"></div>
<div class="ab" style="left:486.8px;top:182.0px;width:453.4px;height:3.7px;background:#f7f7f7"></div>
<div class="ab" style="left:900.4px;top:49.1px;width:12.2px;height:12.4px;background:rgba(255,255,255,0.10);border:0.6px solid rgba(0,0,0,0.06);border-radius:1px"></div>
<div class="ab" style="left:912.6999999999999px;top:49.1px;width:12.2px;height:12.4px;background:rgba(255,255,255,0.10);border:0.6px solid rgba(0,0,0,0.06);border-radius:1px"></div>
<div class="ab" style="left:925.0px;top:49.1px;width:12.2px;height:12.4px;background:rgba(255,255,255,0.10);border:0.6px solid rgba(0,0,0,0.06);border-radius:1px"></div>
<svg style="left:902.7px;top:51.60px" width="8" height="8" viewBox="0 0 16 16"><path d="M1 1h13v2H1zM1 4h10v1.5L4 13H1z" fill="#b0b0b0"/><path d="M6 15l7-7 1.6 1.6-7 7z" fill="#555"/></svg>
<svg style="left:915px;top:52.90px" width="8" height="5.8" viewBox="0 0 16 12"><rect x="0" y="0" width="16" height="12" rx="6" fill="#9a9a9a"/><circle cx="10.5" cy="6" r="3.3" fill="#fff"/></svg>
<svg style="left:928.5px;top:51.60px" width="6.8" height="8" viewBox="0 0 14 16"><path d="M2 4h10l-1 12H3z" fill="none" stroke="#c4c4c4" stroke-width="1.4"/><path d="M1 2.5h12M5 2.5V1h4v1.5" stroke="#c4c4c4" stroke-width="1.4" fill="none"/><path d="M5.5 6.5v7M8.5 6.5v7" stroke="#c4c4c4" stroke-width="1"/></svg>
<svg style="left:491.4px;top:51.80px" width="7.8" height="7.8" viewBox="0 0 16 16"><rect x="0.5" y="0.5" width="15" height="15" fill="#f4f4f4" stroke="#9a9a9a" stroke-width="1"/><rect x="0.5" y="0.5" width="15" height="3.5" fill="#c8c8c8"/><rect x="8" y="7" width="6" height="6" fill="#3a7ae0"/></svg>
<div class="ab" style="left:379px;top:21.6px;width:581px;height:32.2px;background:#eeeeee;border-top:1px solid #fafafa"></div>
<div class="ab" style="left:379px;top:53.6px;width:581px;height:0.9px;background:#d4d4d4"></div>
<div class="t" style="left:492px;top:69.50px;font-size:7.05px;color:#262626;font-weight:bold">Was geschieht mit der gespendeten Kleidung?</div>
<div class="t" style="left:492px;top:78.50px;font-size:6.5px;color:#595959;letter-spacing:0.19px">Den größeren Teil, meist beschädigte Textilien und nicht mehr tragbare Textilien, gibt das Rote Kreuz an eine Verwertungsgesellschaft, die die</div>
<div class="t" style="left:492px;top:87.50px;font-size:6.5px;color:#595959;letter-spacing:0.19px">wertvollen Rohstoffe weiterverarbeitet. So entstehen zum Beispiel Fußmatten, Autositzbezüge oder Putzlappen.</div>
<div class="t" style="left:492px;top:105.50px;font-size:6.5px;color:#595959;letter-spacing:0.19px">Fünf Prozent der gesammelten Kleidung werden in zentralen Katastrophenschutzlagern nach Klimazonen getrennt bereit gehalten.</div>
<div class="t" style="left:492px;top:123.50px;font-size:6.5px;color:#595959;letter-spacing:0.19px">Leider landen viele Tonnen gebrauchte Kleidung im Hausmüll, vergrößern den Müllberg und stellen eine Belastung für die Umwelt dar. Denn</div>
<div class="t" style="left:492px;top:132.50px;font-size:6.5px;color:#595959;letter-spacing:0.19px">vielen Bundesbürgern ist nicht bekannt, dass Textilien mit synthetischen Stoffen wie Polyester oder Polyamid laut deutschem Abfallgesetz als</div>
<div class="t" style="left:492px;top:141.50px;font-size:6.5px;color:#595959;letter-spacing:0.19px">Sondermüll einzuordnen sind.</div>
<div class="t" style="left:492px;top:159.50px;font-size:6.5px;color:#595959;letter-spacing:0.19px">Mit dem Erlös kann das DRK die Jugendarbeit, den Suchdienst, die Kleiderkammern selbst oder unsere ehrenamtlichen Bereitschaften</div>
<div class="t" style="left:492px;top:168.50px;font-size:6.5px;color:#595959;letter-spacing:0.19px">unterstützen, wie zur Anschaffung von Ausrüstung, die im Katastrophenschutz benötigt wird.</div>
<div class="ab" style="left:486.3px;top:194.4px;width:43.5px;height:12.2px;background:#f5f5f5;border:0.7px solid #e4e4e4;border-radius:1.2px"></div>
<div class="ab" style="left:516.8px;top:194.4px;width:0.7px;height:12.2px;background:#e4e4e4"></div>
<svg style="left:489px;top:196.80px" width="8.2" height="7.9" viewBox="0 0 16 15.4"><rect x="0" y="0" width="12" height="2.6" fill="#a8a8a8"/><rect x="0" y="3.4" width="10" height="10" fill="#bdbdbd"/><path d="M1.5 6h7M1.5 8.5h5M1.5 11h4" stroke="#d8d8d8" stroke-width="0.9"/><path d="M11.6 8v7.4M7.9 11.7h7.4" stroke="#f5f5f5" stroke-width="4.2"/><path d="M11.6 8.6v6.4M8.4 11.8h6.4" stroke="#8c8c8c" stroke-width="2.2"/></svg>
<div class="t" style="left:499px;top:196.00px;font-size:6.6px;color:#c2c2c2;">Inhalt</div>
<svg style="left:520px;top:196.80px" width="7.2" height="7.2" viewBox="0 0 14 14"><rect x="0" y="0" width="12" height="2.6" fill="#a8a8a8"/><rect x="0" y="3.4" width="10" height="10" fill="#bdbdbd"/><path d="M6 14l2-3 4.5-4.5 1.5 1.5L9.5 12.5z" fill="#666" stroke="#f5f5f5" stroke-width="0.8"/></svg>
<div class="ab" style="left:486px;top:212.2px;width:455px;height:61.80000000000003px;background:#fff;border:0.8px solid #c4c4c4;border-radius:1px"></div>
<div class="ab" style="left:486.4px;top:212.6px;width:454.2px;height:17.400000000000013px;background:#d2d2d2"></div>
<div class="ab" style="left:486.8px;top:266.8px;width:453.4px;height:3.7px;background:#f7f7f7"></div>
<div class="ab" style="left:900.4px;top:215.1px;width:12.2px;height:12.4px;background:rgba(255,255,255,0.10);border:0.6px solid rgba(0,0,0,0.06);border-radius:1px"></div>
<div class="ab" style="left:912.6999999999999px;top:215.1px;width:12.2px;height:12.4px;background:rgba(255,255,255,0.10);border:0.6px solid rgba(0,0,0,0.06);border-radius:1px"></div>
<div class="ab" style="left:925.0px;top:215.1px;width:12.2px;height:12.4px;background:rgba(255,255,255,0.10);border:0.6px solid rgba(0,0,0,0.06);border-radius:1px"></div>
<svg style="left:902.7px;top:217.60px" width="8" height="8" viewBox="0 0 16 16"><path d="M1 1h13v2H1zM1 4h10v1.5L4 13H1z" fill="#222"/><path d="M6 15l7-7 1.6 1.6-7 7z" fill="#111"/></svg>
<svg style="left:915px;top:218.90px" width="8" height="5.8" viewBox="0 0 16 12"><rect x="0" y="0" width="16" height="12" rx="6" fill="#111"/><circle cx="10.5" cy="6" r="3.3" fill="#fff"/></svg>
<svg style="left:928.5px;top:217.60px" width="6.8" height="8" viewBox="0 0 14 16"><path d="M2 4h10l-1 12H3z" fill="none" stroke="#555" stroke-width="1.4"/><path d="M1 2.5h12M5 2.5V1h4v1.5" stroke="#555" stroke-width="1.4" fill="none"/><path d="M5.5 6.5v7M8.5 6.5v7" stroke="#555" stroke-width="1"/></svg>
<svg style="left:491.4px;top:217.80px" width="8" height="7" viewBox="0 0 16 14"><path d="M8 0l8 3.5v7L8 14 0 10.5v-7z" fill="#e84b5b"/><path d="M0 3.5L8 7v7L0 10.5z" fill="#f2c22a"/><path d="M0 3.5L8 0l8 3.5L8 7z" fill="#7cc24a"/></svg>
<div class="t" style="left:492px;top:235.50px;font-size:7.2px;color:#262626;font-weight:bold">Kleidercontainer Standorte unserer Kleidercontainer <i>[Verborgen]</i></div>
<div class="t" style="left:492px;top:244.40px;font-size:6.9px;color:#262626;font-weight:bold">DRK Kleidercontaineranzeige</div>
<div class="ab" style="left:486.3px;top:278.8px;width:43.5px;height:12.2px;background:#f5f5f5;border:0.7px solid #e4e4e4;border-radius:1.2px"></div>
<div class="ab" style="left:516.8px;top:278.8px;width:0.7px;height:12.2px;background:#e4e4e4"></div>
<svg style="left:489px;top:281.20px" width="8.2" height="7.9" viewBox="0 0 16 15.4"><rect x="0" y="0" width="12" height="2.6" fill="#a8a8a8"/><rect x="0" y="3.4" width="10" height="10" fill="#bdbdbd"/><path d="M1.5 6h7M1.5 8.5h5M1.5 11h4" stroke="#d8d8d8" stroke-width="0.9"/><path d="M11.6 8v7.4M7.9 11.7h7.4" stroke="#f5f5f5" stroke-width="4.2"/><path d="M11.6 8.6v6.4M8.4 11.8h6.4" stroke="#8c8c8c" stroke-width="2.2"/></svg>
<div class="t" style="left:499px;top:280.40px;font-size:6.6px;color:#c2c2c2;">Inhalt</div>
<svg style="left:520px;top:281.20px" width="7.2" height="7.2" viewBox="0 0 14 14"><rect x="0" y="0" width="12" height="2.6" fill="#a8a8a8"/><rect x="0" y="3.4" width="10" height="10" fill="#bdbdbd"/><path d="M6 14l2-3 4.5-4.5 1.5 1.5L9.5 12.5z" fill="#666" stroke="#f5f5f5" stroke-width="0.8"/></svg>
<div class="ab" style="left:486px;top:297px;width:455px;height:120.6px;background:#fff;border:0.8px solid #d9d9d9;border-radius:1px"></div>
<div class="ab" style="left:486.4px;top:297.4px;width:454.2px;height:17.900000000000013px;background:#e6e6e6"></div>
<div class="ab" style="left:486.8px;top:410.4px;width:453.4px;height:3.7px;background:#f7f7f7"></div>
<div class="ab" style="left:900.4px;top:300.40000000000003px;width:12.2px;height:12.4px;background:rgba(255,255,255,0.10);border:0.6px solid rgba(0,0,0,0.06);border-radius:1px"></div>
<div class="ab" style="left:912.6999999999999px;top:300.40000000000003px;width:12.2px;height:12.4px;background:rgba(255,255,255,0.10);border:0.6px solid rgba(0,0,0,0.06);border-radius:1px"></div>
<div class="ab" style="left:925.0px;top:300.40000000000003px;width:12.2px;height:12.4px;background:rgba(255,255,255,0.10);border:0.6px solid rgba(0,0,0,0.06);border-radius:1px"></div>
<svg style="left:902.7px;top:302.90px" width="8" height="8" viewBox="0 0 16 16"><path d="M1 1h13v2H1zM1 4h10v1.5L4 13H1z" fill="#b0b0b0"/><path d="M6 15l7-7 1.6 1.6-7 7z" fill="#555"/></svg>
<svg style="left:915px;top:304.20px" width="8" height="5.8" viewBox="0 0 16 12"><rect x="0" y="0" width="16" height="12" rx="6" fill="#9a9a9a"/><circle cx="10.5" cy="6" r="3.3" fill="#fff"/></svg>
<svg style="left:928.5px;top:302.90px" width="6.8" height="8" viewBox="0 0 14 16"><path d="M2 4h10l-1 12H3z" fill="none" stroke="#c4c4c4" stroke-width="1.4"/><path d="M1 2.5h12M5 2.5V1h4v1.5" stroke="#c4c4c4" stroke-width="1.4" fill="none"/><path d="M5.5 6.5v7M8.5 6.5v7" stroke="#c4c4c4" stroke-width="1"/></svg>
<svg style="left:491.4px;top:303.10px" width="7.8" height="7.8" viewBox="0 0 16 16"><rect x="0.5" y="0.5" width="15" height="15" fill="#f4f4f4" stroke="#9a9a9a" stroke-width="1"/><rect x="0.5" y="0.5" width="15" height="3.5" fill="#c8c8c8"/><rect x="8" y="7" width="6" height="6" fill="#3a7ae0"/></svg>
<div class="t" style="left:492px;top:319.70px;font-size:7.2px;color:#262626;font-weight:bold">Gerne nehmen wir Ihre private Kleiderspende entgegen. <i>[Verborgen]</i></div>
<div class="t" style="left:492px;top:328.60px;font-size:6.5px;color:#595959;letter-spacing:0.19px">Gerne nehmen wir Ihre private Kleiderspende entgegen.</div>
<div class="t" style="left:492px;top:337.50px;font-size:6.5px;color:#595959;letter-spacing:0.19px">Geben Sie die Altkleidung einfach in den nächsten Rotkreuz – Altkleidercontainer.</div>
<div class="t" style="left:492px;top:346.40px;font-size:6.5px;color:#595959;letter-spacing:0.19px">Matratzen und Möbel können wir leider nicht annehmen. Bei Reklamationen oder versehentlichem Einwurf von Kleidung können sie uns während</div>
<div class="t" style="left:492px;top:355.30px;font-size:6.5px;color:#595959;letter-spacing:0.19px">der Geschäftszeiten unter der Telefonnummer 0123 / 456-789 erreichen.</div>
<svg style="left:493.1px;top:365.4px" width="27.8" height="32" viewBox="0 0 27.8 32"><rect width="27.8" height="32" fill="#8e8e8e"/><rect x="1.2" y="1" width="25.4" height="30" fill="#b2b2b2"/><rect x="1.2" y="1" width="25.4" height="3" fill="#9a9a9a"/><rect x="8" y="2" width="11" height="2.5" fill="#d0d0d0"/><rect x="7" y="5" width="13" height="2" fill="#8a8a8a"/><rect x="2" y="9.3" width="24" height="4.2" fill="#d94040"/><path d="M5 10.8h18" stroke="#f0b0b0" stroke-width="0.8"/><path d="M4 16h20M4 18h17M4 22h19M8 24h15M8 26h12" stroke="#7a7a7a" stroke-width="0.7"/><path d="M8.2 25.5v6.5M5 28.8h6.5" stroke="#c8102e" stroke-width="2.2"/><rect x="0" y="30.5" width="27.8" height="1.5" fill="#7a7a7a"/></svg>
<div class="t" style="left:492px;top:397.00px;font-size:6.5px;color:#595959;letter-spacing:0.19px">Kleidercontainer</div>
<div class="ab" style="left:486.3px;top:422.5px;width:43.5px;height:12.2px;background:#f5f5f5;border:0.7px solid #e4e4e4;border-radius:1.2px"></div>
<div class="ab" style="left:516.8px;top:422.5px;width:0.7px;height:12.2px;background:#e4e4e4"></div>
<svg style="left:489px;top:424.90px" width="8.2" height="7.9" viewBox="0 0 16 15.4"><rect x="0" y="0" width="12" height="2.6" fill="#a8a8a8"/><rect x="0" y="3.4" width="10" height="10" fill="#bdbdbd"/><path d="M1.5 6h7M1.5 8.5h5M1.5 11h4" stroke="#d8d8d8" stroke-width="0.9"/><path d="M11.6 8v7.4M7.9 11.7h7.4" stroke="#f5f5f5" stroke-width="4.2"/><path d="M11.6 8.6v6.4M8.4 11.8h6.4" stroke="#8c8c8c" stroke-width="2.2"/></svg>
<div class="t" style="left:499px;top:424.10px;font-size:6.6px;color:#c2c2c2;">Inhalt</div>
<svg style="left:520px;top:424.90px" width="7.2" height="7.2" viewBox="0 0 14 14"><rect x="0" y="0" width="12" height="2.6" fill="#a8a8a8"/><rect x="0" y="3.4" width="10" height="10" fill="#bdbdbd"/><path d="M6 14l2-3 4.5-4.5 1.5 1.5L9.5 12.5z" fill="#666" stroke="#f5f5f5" stroke-width="0.8"/></svg>
<div class="ab" style="left:486px;top:440.3px;width:455px;height:80.6px;background:#fff;border:0.8px solid #d9d9d9;border-radius:1px"></div>
<div class="ab" style="left:486.4px;top:440.7px;width:454.2px;height:17.6px;background:#e6e6e6"></div>
<div class="ab" style="left:486.8px;top:513.7px;width:453.4px;height:3.7px;background:#f7f7f7"></div>
<div class="ab" style="left:900.4px;top:443.40000000000003px;width:12.2px;height:12.4px;background:rgba(255,255,255,0.10);border:0.6px solid rgba(0,0,0,0.06);border-radius:1px"></div>
<div class="ab" style="left:912.6999999999999px;top:443.40000000000003px;width:12.2px;height:12.4px;background:rgba(255,255,255,0.10);border:0.6px solid rgba(0,0,0,0.06);border-radius:1px"></div>
<div class="ab" style="left:925.0px;top:443.40000000000003px;width:12.2px;height:12.4px;background:rgba(255,255,255,0.10);border:0.6px solid rgba(0,0,0,0.06);border-radius:1px"></div>
<svg style="left:902.7px;top:445.90px" width="8" height="8" viewBox="0 0 16 16"><path d="M1 1h13v2H1zM1 4h10v1.5L4 13H1z" fill="#b0b0b0"/><path d="M6 15l7-7 1.6 1.6-7 7z" fill="#555"/></svg>
<svg style="left:915px;top:447.20px" width="8" height="5.8" viewBox="0 0 16 12"><rect x="0" y="0" width="16" height="12" rx="6" fill="#9a9a9a"/><circle cx="10.5" cy="6" r="3.3" fill="#fff"/></svg>
<svg style="left:928.5px;top:445.90px" width="6.8" height="8" viewBox="0 0 14 16"><path d="M2 4h10l-1 12H3z" fill="none" stroke="#c4c4c4" stroke-width="1.4"/><path d="M1 2.5h12M5 2.5V1h4v1.5" stroke="#c4c4c4" stroke-width="1.4" fill="none"/><path d="M5.5 6.5v7M8.5 6.5v7" stroke="#c4c4c4" stroke-width="1"/></svg>
<svg style="left:491.4px;top:446.10px" width="7.8" height="7.8" viewBox="0 0 16 16"><rect x="0.5" y="0.5" width="15" height="15" fill="#f4f4f4" stroke="#9a9a9a" stroke-width="1"/><rect x="0.5" y="0.5" width="15" height="3.5" fill="#c8c8c8"/><rect x="8" y="7" width="6" height="6" fill="#3a7ae0"/></svg>
<div class="t" style="left:492px;top:463.00px;font-size:6.9px;color:#262626;font-weight:bold">Wie geht es weiter?</div>
<div class="ab" style="left:390.7px;top:24.2px;width:59.9px;height:12.3px;background:#fff;border:0.6px solid #d4d4d4;border-radius:1.5px"></div>
<div class="t" style="left:393.3px;top:25.50px;font-size:6.5px;color:#777;">Spalten</div>
<svg style="left:442.3px;top:28.7px" width="4.7" height="3" viewBox="0 0 10 6"><path d="M1.3 1.3l3.7 3.4 3.7-3.4" fill="none" stroke="#222" stroke-width="2.7"/></svg>
<div class="t" style="left:453.2px;top:25.50px;font-size:6.75px;color:#3a3a3a;">Sprache:</div>
<div class="ab" style="left:482.8px;top:24.1px;width:84.1px;height:12.7px;background:#fff;border:0.6px solid #d4d4d4;border-radius:1.5px"></div>
<div class="t" style="left:485.3px;top:25.50px;font-size:6.5px;color:#777;">Standard</div>
<svg style="left:558.5px;top:28.7px" width="4.7" height="3" viewBox="0 0 10 6"><path d="M1.3 1.3l3.7 3.4 3.7-3.4" fill="none" stroke="#222" stroke-width="2.7"/></svg>
<div class="ab" style="left:390.7px;top:39.3px;width:25px;height:12px;background:#ececec;border:0.6px solid #d6d6d6;border-radius:1.5px"></div>
<div class="ab" style="left:403.7px;top:39.3px;width:0.6px;height:12px;background:#d6d6d6"></div>
<div class="ab" style="left:419.4px;top:39.3px;width:37.5px;height:12px;background:#ececec;border:0.6px solid #d6d6d6;border-radius:1.5px"></div>
<div class="ab" style="left:431.7px;top:39.3px;width:0.6px;height:12px;background:#d6d6d6"></div>
<div class="ab" style="left:444.6px;top:39.3px;width:0.6px;height:12px;background:#d6d6d6"></div>
<svg style="left:422.2px;top:41.7px" width="6.4" height="7.5" viewBox="0 0 13 15"><path d="M0.5 0.5h8l4 4v10H0.5z" fill="#d4d4d4" stroke="#c0c0c0" stroke-width="1"/><path d="M3 7h7M3 9.5h7" stroke="#aaa" stroke-width="1.2"/></svg>
<svg style="left:0;top:0" width="960" height="60" viewBox="0 0 960 60"><circle cx="436.9" cy="45.6" r="2.6" fill="none" stroke="#1a1a1a" stroke-width="1.3"/><path d="M438.8 47.5l2.6 2" stroke="#1a1a1a" stroke-width="1.6" stroke-linecap="round"/><path d="M407.2 49.4V42.4h4l2 2v1.4M409.8 49.4h-2.6" fill="none" stroke="#2a2a2a" stroke-width="1.1"/><path d="M410.2 49.8l0.5-1.6 2.9-2.9 1.1 1.1-2.9 2.9z" fill="#111"/><rect x="393.6" y="41.9" width="7.6" height="1.6" fill="#444"/><rect x="393.6" y="43.5" width="7.6" height="5.6" fill="#8c8c8c"/><path d="M396.4 47.4c1.1-1.6 4-1.6 5.1 0-1.1 1.6-4 1.6-5.1 0z" fill="#111" stroke="#8c8c8c" stroke-width="0.4"/><rect x="446.8" y="41.9" width="7" height="1.6" fill="#444"/><rect x="446.8" y="43.5" width="7" height="5.6" fill="#8c8c8c"/><path d="M452 45.4v4.2M449.9 47.5h4.2" stroke="#f0f0f0" stroke-width="2.4"/><path d="M452 45.8v3.4M450.3 47.5h3.4" stroke="#111" stroke-width="1.3"/></svg>
<div class="t" style="left:671px;top:25.40px;font-size:6.9px;color:#444;">Pfad:</div>
<div class="t" style="left:689.2px;top:25.40px;font-size:6.9px;color:#444;"><u>...e/Start/Angebote/Spalte 4/Existenzsichernde Hilfe/</u></div>
<svg style="left:854.7px;top:26.3px" width="6.3" height="7" viewBox="0 0 13 14"><path d="M.7.7h8l3.6 3.6v9H.7z" fill="#f8f8f8" stroke="#aaa" stroke-width="1"/></svg>
<div class="t" style="left:864px;top:25.40px;font-size:7.45px;color:#222;font-weight:bold">Kleidercontainer [2018]</div>
<div class="ab" style="left:901.9px;top:39.1px;width:12.8px;height:12.4px;background:#ececec;border:0.7px solid #d8d8d8;border-radius:1.5px"></div>
<div class="ab" style="left:917.4px;top:39.1px;width:12.8px;height:12.4px;background:#ececec;border:0.7px solid #d8d8d8;border-radius:1.5px"></div>
<div class="ab" style="left:933.4px;top:39.1px;width:12.8px;height:12.4px;background:#ececec;border:0.7px solid #d8d8d8;border-radius:1.5px"></div>
<svg style="left:905.8px;top:41.9px" width="4.4" height="7.2" viewBox="0 0 10 16"><path d="M4 0h5.5L6.5 6H10L2 16l2.2-7.5H0.5z" fill="#111"/></svg>
<svg style="left:919.7px;top:41.2px" width="8.4" height="8.4" viewBox="0 0 24 24"><path d="M12 2.2l3 6.6 7.2.8-5.4 4.9 1.5 7.1L12 18l-6.3 3.6 1.5-7.1L1.8 9.6 9 8.8z" fill="none" stroke="#222" stroke-width="2.4" stroke-linejoin="round"/></svg>
<div class="t" style="left:937.4px;top:41.30px;font-size:6.8px;color:#111;font-weight:bold">?</div>
<div class="ab" style="left:905px;top:232px;width:28.9px;height:7.3px;background:#ffffd0;border:0.5px solid #555"></div>
<div class="t" style="left:905.6px;top:231.80px;font-size:5.6px;color:#111;letter-spacing:-0.05px">Bearbeiten</div>
<div class="ab" style="left:378px;top:232px;width:6.7px;height:40px;background:#f4f4f4;border:0.8px solid #c4c4c4;border-left:none"></div>
<svg style="left:380.9px;top:250.4px" width="2.6" height="2.9" viewBox="0 0 3 3"><path d="M3 0v3L0 1.5z" fill="#222"/></svg>
<div class="ab" style="left:868.1px;top:200.2px;width:85.7px;height:52.7px;border-radius:50%;background:rgba(40,235,20,0.36)"></div>
</body></html>
